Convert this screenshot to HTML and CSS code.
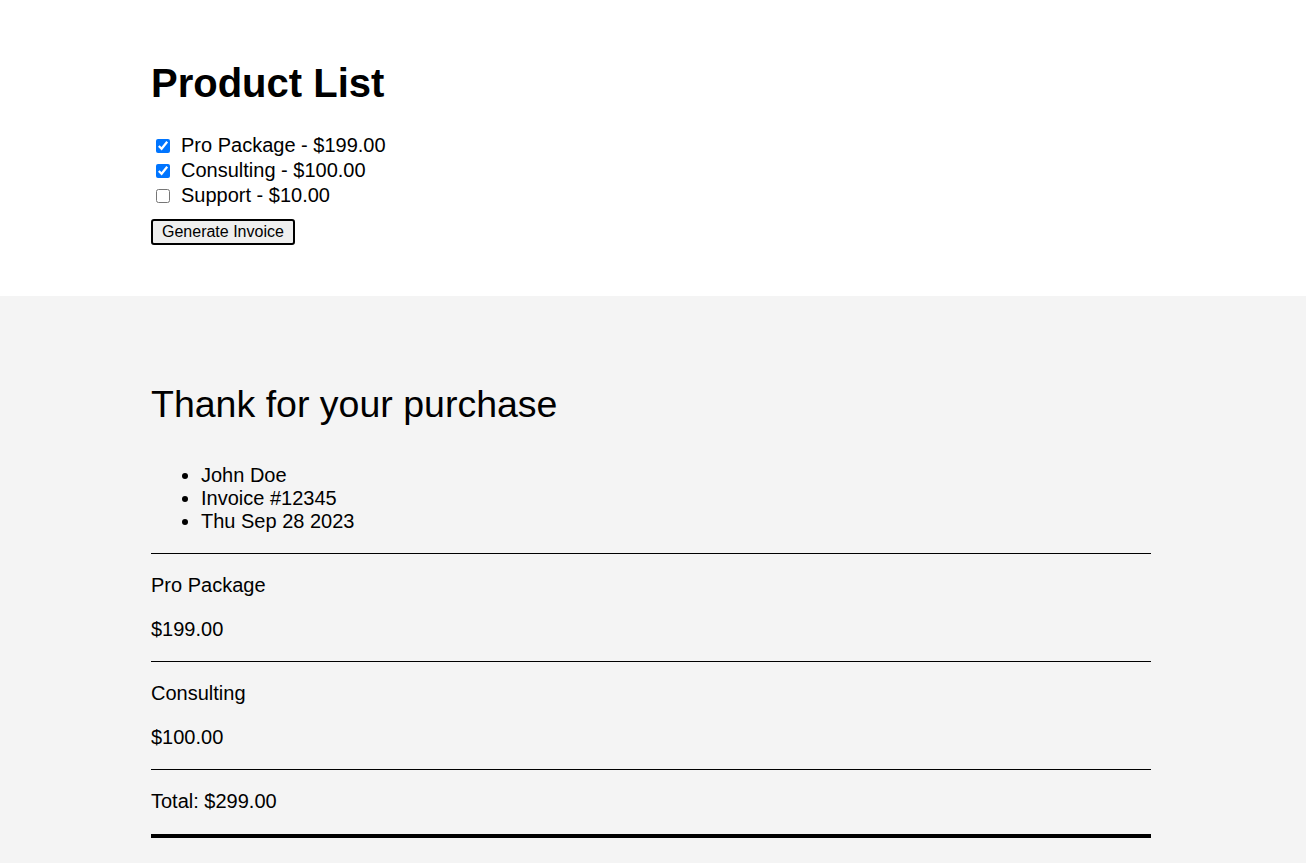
FILE: index.html
```html
<!DOCTYPE html>
<html lang="en">
<head>
<meta charset="utf-8">
<title>Product List</title>
<link rel="stylesheet" href="styles.css">
</head>
<body>
  <section class="products">
    <div class="wrap">
      <h1 class="title">Product List</h1>
      <div class="options">
        <label class="option"><input type="checkbox" class="check" checked>Pro Package - $199.00</label>
        <label class="option"><input type="checkbox" class="check" checked>Consulting - $100.00</label>
        <label class="option"><input type="checkbox" class="check">Support - $10.00</label>
      </div>
      <button class="generate" type="button">Generate Invoice</button>
    </div>
  </section>
  <section class="invoice">
    <div class="wrap">
      <h2 class="thanks">Thank for your purchase</h2>
      <ul class="meta">
        <li>John Doe</li>
        <li>Invoice #12345</li>
        <li>Thu Sep 28 2023</li>
      </ul>
      <div class="item">
        <p class="line">Pro Package</p>
        <p class="line">$199.00</p>
      </div>
      <div class="item">
        <p class="line">Consulting</p>
        <p class="line">$100.00</p>
      </div>
      <div class="item total">
        <p class="line">Total: $299.00</p>
      </div>
    </div>
  </section>
</body>
</html>
```

FILE: styles.css
```css
html, body {
  margin: 0;
  padding: 0;
}

body {
  font-family: "Liberation Sans", Arial, sans-serif;
  font-size: 20px;
  color: #000;
  background: #f4f4f4;
}

.wrap {
  width: 1000px;
  margin-left: 151px;
}

.products {
  background: #fff;
  padding: 60px 0 51px;
}

.title {
  font-size: 40px;
  font-weight: bold;
  line-height: 46px;
  margin: 0 0 27px;
}

.options {
  display: flex;
  flex-direction: column;
}

.option {
  display: flex;
  align-items: center;
  height: 25px;
  line-height: 25px;
}

.check {
  width: 14px;
  height: 14px;
  margin: 0 11px 0 5px;
  accent-color: #0075ff;
}

.generate {
  margin-top: 11px;
  font-family: "Liberation Sans", Arial, sans-serif;
  font-size: 16px;
  line-height: 18px;
  padding: 2px 9px;
  border: 2px solid #000;
  border-radius: 3px;
  background: #efefef;
  color: #000;
}

.invoice {
  background: #f4f4f4;
  padding: 86px 0 30px;
}

.thanks {
  font-size: 37.5px;
  font-weight: normal;
  line-height: 45px;
  margin: 0 0 37px;
}

.meta {
  margin: 0 0 20px;
  padding-left: 50px;
  line-height: 23px;
}

.item {
  border-top: 1px solid #000;
}

.line {
  margin: 20px 0;
  line-height: 23.5px;
}

.total {
  border-bottom: 4px solid #000;
}
```
